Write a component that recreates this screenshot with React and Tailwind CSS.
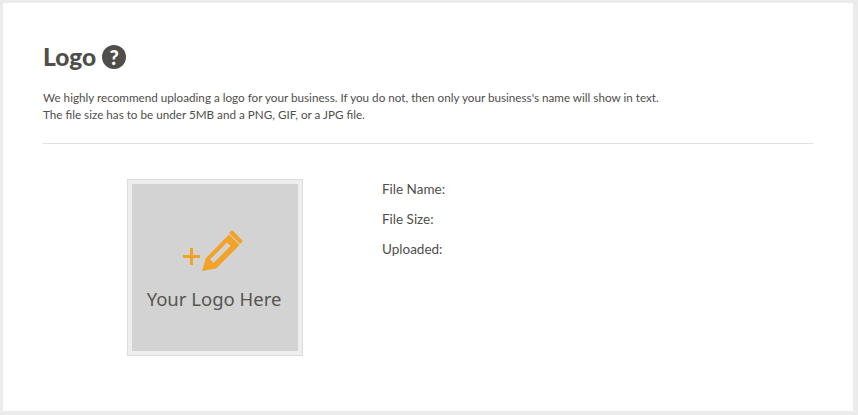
import React from 'react';

const LogoPlaceholder = () => (
  <div className="w-[176px] h-[177px] border border-[#dcdcdc] bg-[#eeeeee] p-1">
    <div className="w-full h-full bg-[#d3d3d3] flex flex-col items-center pt-[45px]">
      <svg width="62" height="42" viewBox="0 0 62 42" className="mr-[4px]">
        <path d="M1 27.500h17M9.500 19v17" stroke="#f2a227" strokeWidth="3" fill="none" />
        <path fill="#f2a227" d="M20 42l4-13 23-23.500 10.500 10.500L34 39.500z" />
        <path fill="#d3d3d3" d="M28 30.500L45 13.500l3.500 3.500L31.500 34z" />
        <path fill="#f2a227" d="M50 1l11 11-3 3-11-11z" />
      </svg>
      <span className="mt-[15px] mr-[2px] text-[18.500px] leading-[26px] text-[#555552] font-['Noto_Sans',sans-serif]">Your Logo Here</span>
    </div>
  </div>
);

export default function App() {
  return (
    <div className="w-[858px] h-[415px] bg-[#ebebeb] pt-[3px] pl-[3px] pr-[5px] pb-[4px] font-['Lato',sans-serif] text-[#4f4e4b]">
      <div className="w-full h-full bg-white pt-[39px] px-[40px]">
        <div className="flex items-center gap-[6px] h-[30px]">
          <h1 className="text-[24.500px] leading-[30px] font-black">Logo</h1>
          <span className="w-[24px] h-[24px] rounded-full bg-[#4f4e4b] text-white text-[20px] leading-[24px] font-black text-center">?</span>
        </div>
        <p className="mt-[17px] text-[11.700px] leading-[17px]">
          We highly recommend uploading a logo for your business. If you do not, then only your business's name will show in text.
          <br />
          The file size has to be under 5MB and a PNG, GIF, or a JPG file.
        </p>
        <div className="mt-[20px] w-[770px] border-t border-[#e0e0e0]" />
        <div className="flex mt-[35px] pl-[84px]">
          <LogoPlaceholder />
          <div className="ml-[79px] flex flex-col gap-[10px] text-[13.500px] leading-[20px]">
            <span>File Name:</span>
            <span>File Size:</span>
            <span>Uploaded:</span>
          </div>
        </div>
      </div>
    </div>
  );
}
